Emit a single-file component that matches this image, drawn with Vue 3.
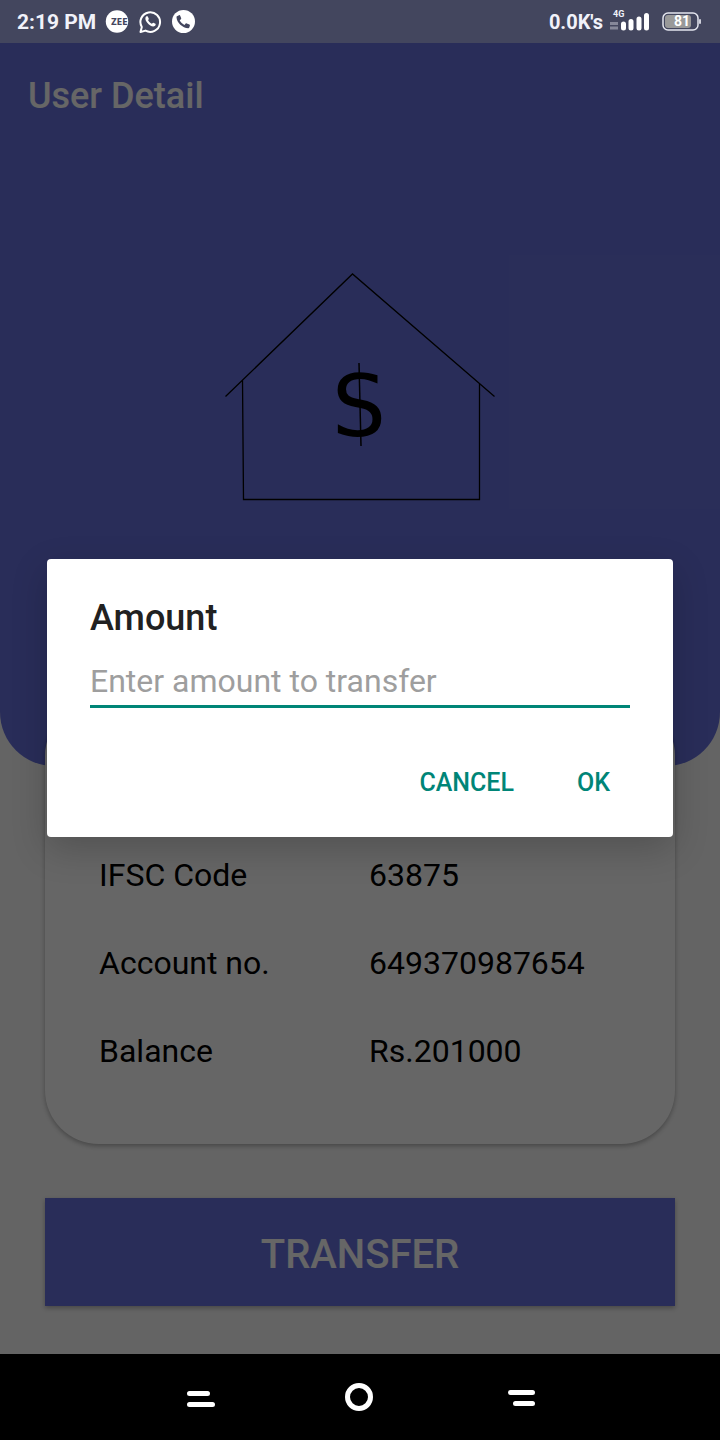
<script setup>
import { ref } from 'vue'

const amount = ref('')
const details = [
  { label: 'IFSC Code', value: '63875' },
  { label: 'Account no.', value: '649370987654' },
  { label: 'Balance', value: 'Rs.201000' },
]
</script>

<template>
  <div class="screen">
    <header class="status">
      <div class="group left">
        <span class="clock">2:19 PM</span>
        <svg width="24" height="24" viewBox="0 0 24 24" aria-hidden="true">
          <circle cx="12" cy="11.500" r="11.200" fill="#fff" />
          <text x="6" y="15" class="zee">ZEE</text>
        </svg>
        <svg width="24" height="24" viewBox="0 0 24 24" aria-hidden="true">
          <path d="M2.500 22 3.800 17A9.800 9.800 0 1 1 7.500 20.600Z" fill="none" stroke="#fff" stroke-width="2" stroke-linejoin="round" />
          <path d="M8.100 6.600c.6-.6 1.400-.6 1.700 0l1 2.100c.2.500-.7 1.200-.7 1.600.8 1.600 2 2.700 3.600 3.400.5 0 1.200-1.200 1.700-1l2 1c.6.300.2 1.500-.3 2-1.300 1.100-3.100.8-4.800-.2-2-1.200-3.500-2.800-4.400-4.700-.7-1.500-.7-3.200.2-4.200Z" fill="#fff" />
        </svg>
        <svg width="24" height="24" viewBox="0 0 24 24" aria-hidden="true">
          <circle cx="12.500" cy="11.500" r="11.500" fill="#fff" />
          <path d="M6 6.200 8 5.200c.5-.2 1 0 1.200.5l1 2.500c.1.400 0 .8-.3 1L8.700 10.300c1 2 2.700 3.700 4.800 4.700l1.200-1.400c.3-.3.6-.4 1-.2l2.700 1.200c.5.200.6.600.5 1l-.6 2c-.1.400-.5.600-1 .6C11.500 18 5.700 12.800 5.500 7c0-.4.200-.700.500-.8Z" fill="#43465e" />
        </svg>
      </div>
      <div class="group right">
        <span class="speed">0.0K's</span>
        <svg width="40" height="28" viewBox="0 0 40 28" aria-hidden="true">
          <text x="3" y="9" class="net">4G</text>
          <path d="M0 15.500h8M0 20h8" stroke="#858799" stroke-width="3" />
          <path d="M13.500 16v4M21 13.500v6.500M29 11v9M36.500 7.500v12.500" stroke="#fff" stroke-width="5" stroke-linecap="round" />
        </svg>
        <svg class="battery" width="40" height="20" viewBox="0 0 40 20" aria-hidden="true">
          <rect x="1" y="1" width="35" height="17" rx="5" fill="none" stroke="#e4e5ee" stroke-width="1.500" />
          <rect x="3" y="3" width="26" height="13" rx="3" fill="#999" />
          <path d="M38 8v3" stroke="#d0d1dc" stroke-width="2" stroke-linecap="round" />
          <text x="12" y="14" class="charge">81</text>
        </svg>
      </div>
    </header>

    <main class="content">
      <section class="hero">
        <h1>User Detail</h1>
        <svg class="house" width="270" height="228" viewBox="0 0 270 228" role="img" aria-label="Bank">
          <path d="M.5 123.500 127.500 1 269.500 123.500M17.500 107 18.500 226.500H254.500V111" fill="none" stroke="#000" stroke-width="1.300" />
          <text x="107" y="163" class="dollar">S</text>
          <path d="M134 90 136 173" stroke="#000" stroke-width="1.500" />
        </svg>
      </section>

      <dl class="card">
        <template v-for="row in details" :key="row.label">
          <dt>{{ row.label }}</dt>
          <dd>{{ row.value }}</dd>
        </template>
      </dl>

      <button class="transfer" type="button">TRANSFER</button>

      <div class="scrim">
        <form class="dialog" role="dialog" aria-labelledby="amount-title" @submit.prevent>
          <label id="amount-title" for="amount">Amount</label>
          <input id="amount" v-model="amount" type="text" inputmode="numeric" placeholder="Enter amount to transfer" />
          <div class="actions">
            <button type="button">CANCEL</button>
            <button type="submit">OK</button>
          </div>
        </form>
      </div>
    </main>

    <nav class="navbar" aria-label="System">
      <button type="button" aria-label="Recent apps">
        <svg width="30" height="30" viewBox="0 0 30 30"><path d="M4.500 11.500h18M4.500 22.500h23" /></svg>
      </button>
      <button type="button" aria-label="Home">
        <svg width="30" height="30" viewBox="0 0 30 30"><circle cx="14" cy="15" r="11.500" /></svg>
      </button>
      <button type="button" aria-label="Back">
        <svg width="30" height="30" viewBox="0 0 30 30"><path d="M5.500 10.500h22M10.500 21.500h17" /></svg>
      </button>
    </nav>
  </div>
</template>

<style>
body {
  margin: 0;
  background: #000;
}
</style>

<style scoped>
.screen {
  display: flex;
  flex-direction: column;
  min-height: 100vh;
  font-family: Roboto, "Liberation Sans", sans-serif;
}

button {
  border: 0;
  padding: 0;
  background: none;
  font-family: inherit;
  font-weight: 500;
}

.status {
  display: flex;
  justify-content: space-between;
  height: 43px;
  padding: 0 18px 0 17px;
  background: #43465e;
  color: #f1f2fa;
}

.group {
  display: flex;
  align-items: center;
}

.left {
  gap: 9px;
}

.right {
  gap: 7px;
}

.clock,
.speed {
  line-height: 24px;
  font-weight: 700;
}

.clock {
  font-size: 21px;
}

.speed {
  font-size: 20px;
}

.battery {
  margin-left: 5px;
}

.zee {
  font: 700 8px "DejaVu Sans", sans-serif;
  fill: #43465e;
}

.net {
  font: 700 9px Roboto, sans-serif;
  fill: #f1f2fa;
}

.charge {
  font: 700 14px Roboto, sans-serif;
  fill: #fff;
}

.content {
  position: relative;
  flex: 1;
  display: flex;
  flex-direction: column;
  background: #fafafa;
}

.hero {
  display: flex;
  flex-direction: column;
  padding: 29px 28px 265px;
  border-radius: 0 0 54px 54px;
  background: #6872df;
}

h1 {
  margin: 0 0 153px;
  font-size: 36px;
  line-height: 48px;
  font-weight: 500;
  color: #fff;
}

.house {
  align-self: center;
}

.dollar {
  font: 85px "DejaVu Sans", sans-serif;
}

.card {
  display: grid;
  grid-template-columns: 1fr 1fr;
  row-gap: 48px;
  margin: -64px 45px 0;
  padding: 153px 36px 73px 54px;
  border-radius: 54px;
  background: #fff;
  box-shadow: 0 2px 5px rgba(0, 0, 0, 0.3);
  font-size: 32px;
  line-height: 40px;
  color: #000;
}

dd {
  margin: 0;
}

.transfer {
  height: 108px;
  margin: 54px 45px 48px;
  padding-top: 4px;
  background: #6872df;
  box-shadow: 0 2px 5px rgba(0, 0, 0, 0.3);
  font-size: 40px;
  color: #fff;
}

.scrim {
  position: absolute;
  inset: 0;
  display: grid;
  align-items: center;
  padding: 0 47px 2px;
  background: rgba(0, 0, 0, 0.6);
}

.dialog {
  display: flex;
  flex-direction: column;
  padding: 35px 43px 18px;
  border-radius: 4px;
  background: #fff;
  box-shadow: 0 12px 36px rgba(0, 0, 0, 0.2);
}

label {
  font-size: 36px;
  line-height: 48px;
  font-weight: 500;
  color: #212121;
}

input {
  box-sizing: border-box;
  height: 50px;
  margin: 16px 0 39px;
  padding: 0;
  border: 0;
  border-bottom: 3px solid #008577;
  outline: 0;
  background: none;
  font-family: inherit;
  font-size: 32px;
  color: #212121;
}

input::placeholder {
  color: #9e9e9e;
  opacity: 1;
}

.actions {
  display: flex;
  justify-content: flex-end;
  gap: 15px;
  margin-right: -4px;
}

.actions button {
  height: 72px;
  padding: 0 24px;
  font-size: 25px;
  color: #008577;
}

.navbar {
  display: flex;
  justify-content: center;
  gap: 128px;
  height: 86px;
  background: #000;
}

.navbar button {
  display: grid;
  place-items: center;
  width: 32px;
}

.navbar svg {
  fill: none;
  stroke: #fff;
  stroke-width: 5;
  stroke-linecap: round;
}
</style>
